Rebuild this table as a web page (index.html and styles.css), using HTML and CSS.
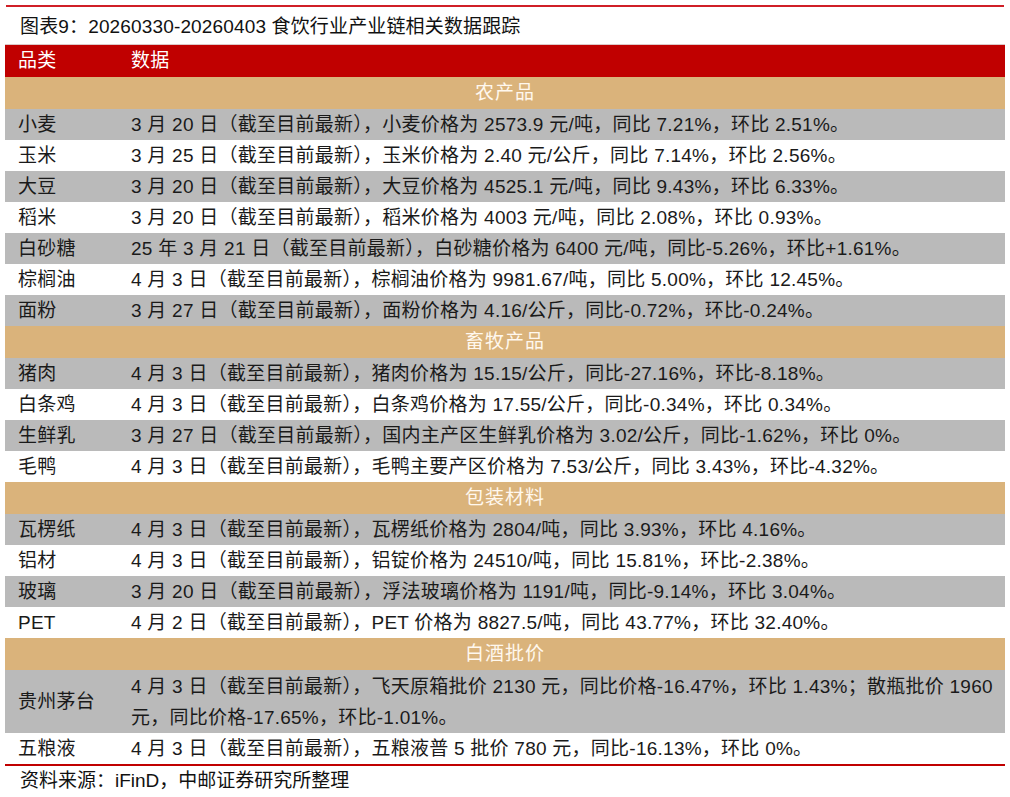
FILE: index.html
```html
<!DOCTYPE html>
<html lang="zh-CN">
<head>
<meta charset="utf-8">
<title>图表9</title>
<link rel="stylesheet" href="styles.css">
</head>
<body>
<div class="page">
  <div class="topline"></div>
  <div class="title">图表9：20260330-20260403 食饮行业产业链相关数据跟踪</div>
  <table class="data">
    <colgroup><col class="c1"><col class="c2"></colgroup>
    <thead>
      <tr class="head"><th>品类</th><th>数据</th></tr>
    </thead>
    <tbody>
      <tr class="sec"><td colspan="2">农产品</td></tr>
      <tr class="g"><td>小麦</td><td>3 月 20 日（截至目前最新），小麦价格为 2573.9 元/吨，同比 7.21%，环比 2.51%。</td></tr>
      <tr><td>玉米</td><td>3 月 25 日（截至目前最新），玉米价格为 2.40 元/公斤，同比 7.14%，环比 2.56%。</td></tr>
      <tr class="g"><td>大豆</td><td>3 月 20 日（截至目前最新），大豆价格为 4525.1 元/吨，同比 9.43%，环比 6.33%。</td></tr>
      <tr><td>稻米</td><td>3 月 20 日（截至目前最新），稻米价格为 4003 元/吨，同比 2.08%，环比 0.93%。</td></tr>
      <tr class="g"><td>白砂糖</td><td>25 年 3 月 21 日（截至目前最新），白砂糖价格为 6400 元/吨，同比-5.26%，环比+1.61%。</td></tr>
      <tr><td>棕榈油</td><td>4 月 3 日（截至目前最新），棕榈油价格为 9981.67/吨，同比 5.00%，环比 12.45%。</td></tr>
      <tr class="g"><td>面粉</td><td>3 月 27 日（截至目前最新），面粉价格为 4.16/公斤，同比-0.72%，环比-0.24%。</td></tr>
      <tr class="sec"><td colspan="2">畜牧产品</td></tr>
      <tr class="g"><td>猪肉</td><td>4 月 3 日（截至目前最新），猪肉价格为 15.15/公斤，同比-27.16%，环比-8.18%。</td></tr>
      <tr><td>白条鸡</td><td>4 月 3 日（截至目前最新），白条鸡价格为 17.55/公斤，同比-0.34%，环比 0.34%。</td></tr>
      <tr class="g"><td>生鲜乳</td><td>3 月 27 日（截至目前最新），国内主产区生鲜乳价格为 3.02/公斤，同比-1.62%，环比 0%。</td></tr>
      <tr><td>毛鸭</td><td>4 月 3 日（截至目前最新），毛鸭主要产区价格为 7.53/公斤，同比 3.43%，环比-4.32%。</td></tr>
      <tr class="sec"><td colspan="2">包装材料</td></tr>
      <tr class="g"><td>瓦楞纸</td><td>4 月 3 日（截至目前最新），瓦楞纸价格为 2804/吨，同比 3.93%，环比 4.16%。</td></tr>
      <tr><td>铝材</td><td>4 月 3 日（截至目前最新），铝锭价格为 24510/吨，同比 15.81%，环比-2.38%。</td></tr>
      <tr class="g"><td>玻璃</td><td>3 月 20 日（截至目前最新），浮法玻璃价格为 1191/吨，同比-9.14%，环比 3.04%。</td></tr>
      <tr><td>PET</td><td>4 月 2 日（截至目前最新），PET 价格为 8827.5/吨，同比 43.77%，环比 32.40%。</td></tr>
      <tr class="sec"><td colspan="2">白酒批价</td></tr>
      <tr class="g tall"><td>贵州茅台</td><td>4 月 3 日（截至目前最新），飞天原箱批价 2130 元，同比价格-16.47%，环比 1.43%；散瓶批价 1960<br>元，同比价格-17.65%，环比-1.01%。</td></tr>
      <tr class="last"><td>五粮液</td><td>4 月 3 日（截至目前最新），五粮液普 5 批价 780 元，同比-16.13%，环比 0%。</td></tr>
    </tbody>
  </table>
  <div class="source">资料来源：iFinD，中邮证券研究所整理</div>
</div>
</body>
</html>
```

FILE: styles.css
```css
html, body {
  margin: 0;
  padding: 0;
  background: #ffffff;
}

body {
  font-family: "Liberation Sans", "Noto Sans CJK SC", sans-serif;
  color: #1a1a1a;
  font-size: 19px;
}

.page {
  width: 1000px;
  padding: 5px 5px 0 5px;
}

.topline {
  height: 2px;
  margin: 0 1px;
  background: #d01f27;
}

.title {
  height: 37px;
  line-height: 39px;
  padding-left: 15px;
  border-bottom: 1px solid #dcc8c8;
  color: #111111;
  white-space: nowrap;
  letter-spacing: 0.15px;
}

.data {
  width: 1000px;
  border-collapse: collapse;
  table-layout: fixed;
  border-bottom: 2px solid #c00000;
}

.data col.c1 {
  width: 113px;
}

.data th,
.data td {
  padding: 0 0 0 13px;
  text-align: left;
  font-weight: normal;
  white-space: nowrap;
  vertical-align: middle;
  line-height: 31px;
  height: 31px;
  letter-spacing: 0.25px;
}

.data tr.head th {
  background: #c00000;
  color: #ffffff;
  height: 32px;
  line-height: 32px;
}

.data tr.sec td {
  background: #dab37b;
  color: #fff8ee;
  text-align: center;
  padding: 0;
  height: 32px;
  line-height: 32px;
  letter-spacing: 1px;
}

.data tr.g td {
  background: #bababa;
}

.data tr.tall td {
  height: 63px;
}

.source {
  line-height: 30px;
  padding-left: 15px;
  color: #111111;
}
```
